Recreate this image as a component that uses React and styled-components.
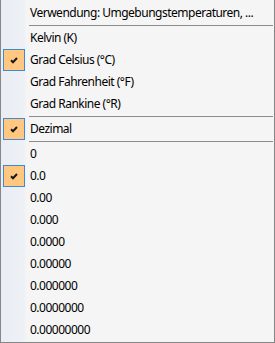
import React from 'react';
import styled, { createGlobalStyle } from 'styled-components';

const GlobalStyle = createGlobalStyle`
  html, body {
    margin: 0;
    padding: 0;
    background: #ffffff;
  }
`;

const units = [
  { label: 'Kelvin (K)' },
  { label: 'Grad Celsius (°C)', checked: true },
  { label: 'Grad Fahrenheit (°F)' },
  { label: 'Grad Rankine (°R)' },
];

const decimals = ['0', '0.0', '0.00', '0.000', '0.0000', '0.00000', '0.000000', '0.0000000', '0.00000000'];

const Check = () => (
  <svg width="8" height="7" viewBox="0 0 8 7">
    <path d="M1 3.2 L3 5.2 L7 1" fill="none" stroke="#1a1a1a" strokeWidth="2" />
  </svg>
);

const MenuItem = ({ label, checked }) => (
  <Item>
    <CheckCell>{checked && <CheckBox><Check /></CheckBox>}</CheckCell>
    <Label>{label}</Label>
  </Item>
);

const App = () => {
  return (
    <>
      <GlobalStyle />
      <Menu>
        <MenuItem label="Verwendung: Umgebungstemperaturen, ..." />
        <Separator />
        {units.map((u) => (
          <MenuItem key={u.label} label={u.label} checked={u.checked} />
        ))}
        <Separator />
        <MenuItem label="Dezimal" checked />
        <Separator />
        {decimals.map((d) => (
          <MenuItem key={d} label={d} checked={d === '0.0'} />
        ))}
      </Menu>
    </>
  );
};

export default App;

const Menu = styled.div`
  width: 275px;
  height: 343px;
  box-sizing: border-box;
  border: 1px solid #868686;
  border-top: none;
  padding-top: 2px;
  display: flex;
  flex-direction: column;
  background: linear-gradient(
    to right,
    #eaeef4 0,
    #edf0f5 22px,
    #f1f3f6 25px,
    #f5f5f5 25px
  );
  font-family: "Noto Sans", "Open Sans", sans-serif;
  font-size: 12px;
  letter-spacing: -0.5px;
  color: #000;
`;

const Item = styled.div`
  height: 22px;
  display: flex;
  align-items: center;
`;

const CheckCell = styled.div`
  width: 29px;
  height: 22px;
  padding-left: 2px;
  box-sizing: border-box;
  flex-shrink: 0;
`;

const CheckBox = styled.div`
  width: 22px;
  height: 22px;
  box-sizing: border-box;
  border: 1px solid #3f8ad8;
  background: #ffc77f;
  display: flex;
  align-items: center;
  justify-content: center;
`;

const Label = styled.span`
  white-space: nowrap;
  line-height: 22px;
`;

const Separator = styled.div`
  height: 1px;
  margin: 1px 1px 1px 28px;
  background: #8c8c8c;
`;
